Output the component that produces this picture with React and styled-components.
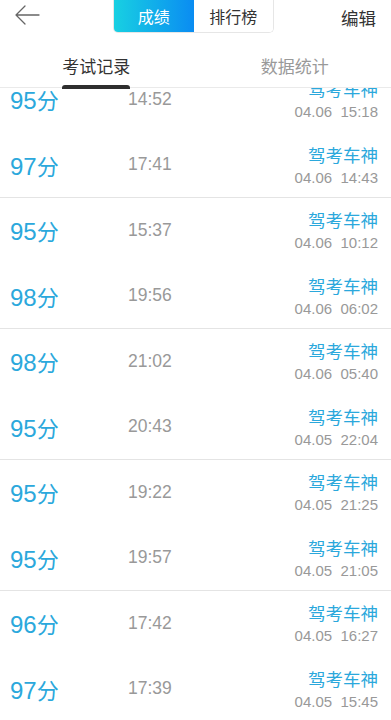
import React from "react";
import styled, { createGlobalStyle } from "styled-components";

const GlobalStyle = createGlobalStyle`
  body {
    margin: 0;
    background: #fff;
    font-family: "Liberation Sans", "Noto Sans CJK SC", sans-serif;
  }
`;

const Page = styled.div`
  width: 391px;
  height: 720px;
  overflow: hidden;
  display: flex;
  flex-direction: column;
  background: #fff;
`;

const TopBar = styled.div`
  height: 40px;
  display: flex;
  align-items: flex-start;
`;

const BackButton = styled.div`
  width: 99px;
  padding: 5px 0 0 14px;
  height: 20px;
  color: #555;
`;

const Segment = styled.div`
  display: flex;
  height: 33px;
  width: 161px;
  border-radius: 0 0 5px 5px;
  border: 1px solid #e6e6e6;
  border-top: none;
  box-sizing: border-box;
  overflow: hidden;
`;

const SegmentItem = styled.div`
  flex: 1;
  display: flex;
  align-items: center;
  justify-content: center;
  font-size: 16px;
  color: ${(p) => (p.$active ? "#fff" : "#333")};
  background: ${(p) =>
    p.$active ? "linear-gradient(90deg, #18d0e2 0%, #0a8cf2 100%)" : "#fff"};
`;

const EditLink = styled.div`
  margin-left: auto;
  padding: 5px 15px 0 0;
  font-size: 17.5px;
  color: #333;
`;

const Tabs = styled.div`
  height: 48px;
  display: flex;
  border-bottom: 1px solid #eaeaea;
  box-sizing: border-box;
  position: relative;
  z-index: 1;
`;

const Tab = styled.div`
  flex: 1;
  display: flex;
  justify-content: center;
  align-items: center;
  padding-top: 4px;
  padding-right: ${(p) => (p.$active ? "6px" : "0")};
  font-size: 17px;
  color: ${(p) => (p.$active ? "#333" : "#999")};
`;

const TabLabel = styled.span`
  position: relative;
  &::after {
    content: "";
    display: ${(p) => (p.$active ? "block" : "none")};
    position: absolute;
    left: 0;
    right: 0;
    top: 32px;
    height: 4px;
    border-radius: 3px 3px 0 0;
    background: #2e2e2e;
  }
`;

const Viewport = styled.div`
  flex: 1;
  overflow: hidden;
`;

const Track = styled.div`
  margin-top: -21px;
`;

const Row = styled.div`
  display: flex;
  align-items: center;
  padding: 0 13px 0 10px;
  border-bottom: 1px solid ${(p) => (p.$line ? "#e4e4e4" : "transparent")};
  box-sizing: border-box;
  height: ${(p) => (p.$line ? "66px" : "65px")};
`;

const Score = styled.div`
  width: 118px;
  font-size: 24px;
  color: #2ba8dc;
  span {
    font-size: 22px;
  }
`;

const Duration = styled.div`
  flex: 1;
  font-size: 17.5px;
  color: #999;
`;

const Meta = styled.div`
  display: flex;
  flex-direction: column;
  align-items: flex-end;
  gap: 3px;
`;

const Source = styled.div`
  font-size: 17.5px;
  color: #2ba8dc;
  font-family: "Noto Sans CJK SC", sans-serif;
  line-height: 22px;
`;

const Stamp = styled.div`
  font-size: 15px;
  color: #999;
  white-space: pre;
`;

const records = [
  ["95", "14:52", "04.06  15:18"],
  ["97", "17:41", "04.06  14:43"],
  ["95", "15:37", "04.06  10:12"],
  ["98", "19:56", "04.06  06:02"],
  ["98", "21:02", "04.06  05:40"],
  ["95", "20:43", "04.05  22:04"],
  ["95", "19:22", "04.05  21:25"],
  ["95", "19:57", "04.05  21:05"],
  ["96", "17:42", "04.05  16:27"],
  ["97", "17:39", "04.05  15:45"],
];

const App = () => {
  return (
    <Page>
      <GlobalStyle />
      <TopBar>
        <BackButton>
          <svg width="26" height="20" viewBox="0 0 26 20" fill="none">
            <path
              d="M25 10H2M11 1L2 10l9 9"
              stroke="#666"
              strokeWidth="1.3"
              strokeLinecap="round"
              strokeLinejoin="round"
            />
          </svg>
        </BackButton>
        <Segment>
          <SegmentItem $active>成绩</SegmentItem>
          <SegmentItem>排行榜</SegmentItem>
        </Segment>
        <EditLink>编辑</EditLink>
      </TopBar>
      <Tabs>
        <Tab $active>
          <TabLabel $active>考试记录</TabLabel>
        </Tab>
        <Tab>
          <TabLabel>数据统计</TabLabel>
        </Tab>
      </Tabs>
      <Viewport>
        <Track>
          {records.map(([score, time, stamp], i) => (
            <Row key={i} $line={i % 2 === 1}>
              <Score>
                {score}
                <span>分</span>
              </Score>
              <Duration>{time}</Duration>
              <Meta>
                <Source>驾考车神</Source>
                <Stamp>{stamp}</Stamp>
              </Meta>
            </Row>
          ))}
        </Track>
      </Viewport>
    </Page>
  );
};

export default App;
